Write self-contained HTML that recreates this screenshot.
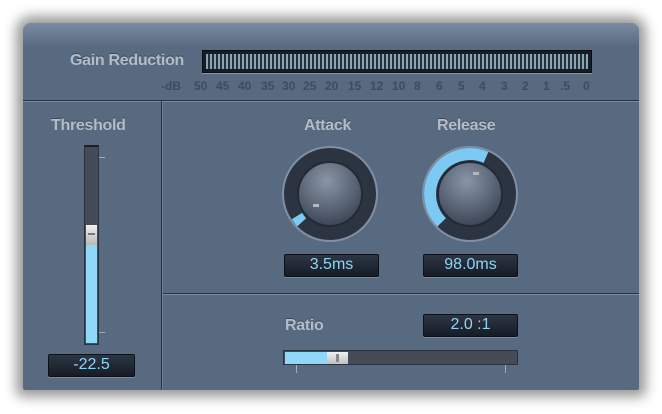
<!DOCTYPE html><html><head><style>
*{margin:0;padding:0;box-sizing:border-box}
body{width:662px;height:414px;background:#fff;position:relative;overflow:hidden;font-family:"Liberation Sans",sans-serif}
.a{position:absolute}
.panel{left:23px;top:23px;width:616px;height:367px;background:#586a80;border-radius:8px 8px 2px 2px;box-shadow:0 0 12px 7px rgba(0,0,0,.4);overflow:hidden}
.lbl{color:#b4bcc8;font-weight:bold;font-size:16px;text-shadow:0 -1px 0 #3c4a5c;letter-spacing:-0.3px}
.box{background:linear-gradient(#2c3644,#161c26);border:1px solid #0c1018;border-radius:2px;box-shadow:0 1px 0 #7a8a9e;color:#8fd4f6;font-size:16px;text-align:center;line-height:20px}
.sc{color:#3d4c60;font-size:12px;font-weight:bold;top:79px}
</style></head><body>
<div class="a panel"></div>
<div class="a" style="left:23px;top:23px;width:616px;height:24px;background:linear-gradient(#7a8ca2,#586a80);border-radius:8px 8px 0 0"></div>
<div class="a lbl" style="left:70px;top:52px">Gain Reduction</div>
<div class="a" style="left:202px;top:50px;width:390px;height:23px;background:#141c26;border:1px solid #0a0e14;box-shadow:0 1px 0 #8596aa;padding:3px"><div style="width:100%;height:100%;background:repeating-linear-gradient(90deg,#8aa6b0 0 2px,#23303c 2px 4px)"></div></div>
<div class="a sc" style="left:161px">-dB</div>
<div class="a sc" style="left:194px">50</div><div class="a sc" style="left:216px">45</div><div class="a sc" style="left:238px">40</div><div class="a sc" style="left:261px">35</div><div class="a sc" style="left:282px">30</div><div class="a sc" style="left:303px">25</div><div class="a sc" style="left:325px">20</div><div class="a sc" style="left:348px">15</div><div class="a sc" style="left:370px">12</div><div class="a sc" style="left:392px">10</div><div class="a sc" style="left:414px">8</div><div class="a sc" style="left:436px">6</div><div class="a sc" style="left:458px">5</div><div class="a sc" style="left:479px">4</div><div class="a sc" style="left:501px">3</div><div class="a sc" style="left:522px">2</div><div class="a sc" style="left:543px">1</div><div class="a sc" style="left:560px">.5</div><div class="a sc" style="left:583px">0</div>
<div class="a" style="left:23px;top:100px;width:616px;height:1px;background:#243246"></div>
<div class="a" style="left:23px;top:101px;width:616px;height:1px;background:#7a8ca0"></div>
<div class="a" style="left:161px;top:101px;width:1px;height:289px;background:#243246"></div>
<div class="a" style="left:162px;top:101px;width:1px;height:289px;background:#6e8096"></div>
<div class="a" style="left:163px;top:293px;width:476px;height:1px;background:#243246"></div>
<div class="a" style="left:163px;top:294px;width:476px;height:1px;background:#7a8ca0"></div>
<div class="a lbl" style="left:51px;top:117px">Threshold</div>
<div class="a" style="left:84px;top:145px;width:15px;height:200px;background:#454c58;border:1px solid #2a3240;border-top:2px solid #1a1e26"></div>
<div class="a" style="left:86px;top:245px;width:11px;height:98px;background:#8fd8f8"></div>
<div class="a" style="left:86px;top:225px;width:11px;height:20px;background:linear-gradient(#f0f0f0,#b8b8b8)"><div style="margin:8px 2px;height:2px;background:#777"></div></div>
<div class="a" style="left:99px;top:157px;width:6px;height:1px;background:#a0aab8"></div>
<div class="a" style="left:99px;top:332px;width:6px;height:1px;background:#a0aab8"></div>
<div class="a box" style="left:48px;top:354px;width:87px;height:23px">-22.5</div>
<div class="a lbl" style="left:304px;top:117px">Attack</div>
<div class="a lbl" style="left:437px;top:117px">Release</div>
<svg class="a" style="left:0;top:0" width="662" height="414">
<defs><radialGradient id="g" cx="45%" cy="30%" r="70%"><stop offset="0" stop-color="#8a96a6"/><stop offset="1" stop-color="#3c4656"/></radialGradient></defs>
<g transform="translate(330,194)">
<circle r="48" fill="#8090a4"/><circle r="46" fill="#2c3442"/>
<path d="M-28.3,28.3 A40,40 0 0 1 -33,22" stroke="#7ccaf4" stroke-width="12" fill="none"/>
<circle r="32" fill="url(#g)" stroke="#222a36" stroke-width="2"/>
<rect x="-17" y="10" width="6" height="3" fill="#b0b8c4"/>
</g>
<g transform="translate(470,194)">
<circle r="48" fill="#8090a4"/><circle r="46" fill="#2c3442"/>
<path d="M-28.3,28.3 A40,40 0 0 1 16,-36.6" stroke="#7ccaf4" stroke-width="12" fill="none"/>
<circle r="32" fill="url(#g)" stroke="#222a36" stroke-width="2"/>
<rect x="3" y="-22" width="6" height="3" fill="#b0b8c4"/>
</g>
</svg>
<div class="a box" style="left:284px;top:254px;width:95px;height:23px">3.5ms</div>
<div class="a box" style="left:423px;top:254px;width:95px;height:23px">98.0ms</div>
<div class="a lbl" style="left:285px;top:317px">Ratio</div>
<div class="a box" style="left:423px;top:314px;width:95px;height:23px">2.0 :1</div>
<div class="a" style="left:283px;top:350px;width:235px;height:15px;background:#454c58;border:1px solid #2a3240"></div>
<div class="a" style="left:285px;top:352px;width:42px;height:12px;background:#8fd8f8"></div>
<div class="a" style="left:327px;top:352px;width:21px;height:12px;background:linear-gradient(#f0f0f0,#c0c0c0)"><div style="margin:2px 9px;height:8px;background:#888"></div></div>
<div class="a" style="left:296px;top:365px;width:1px;height:8px;background:#a0aab8"></div>
<div class="a" style="left:505px;top:365px;width:1px;height:8px;background:#a0aab8"></div>
</body></html>
